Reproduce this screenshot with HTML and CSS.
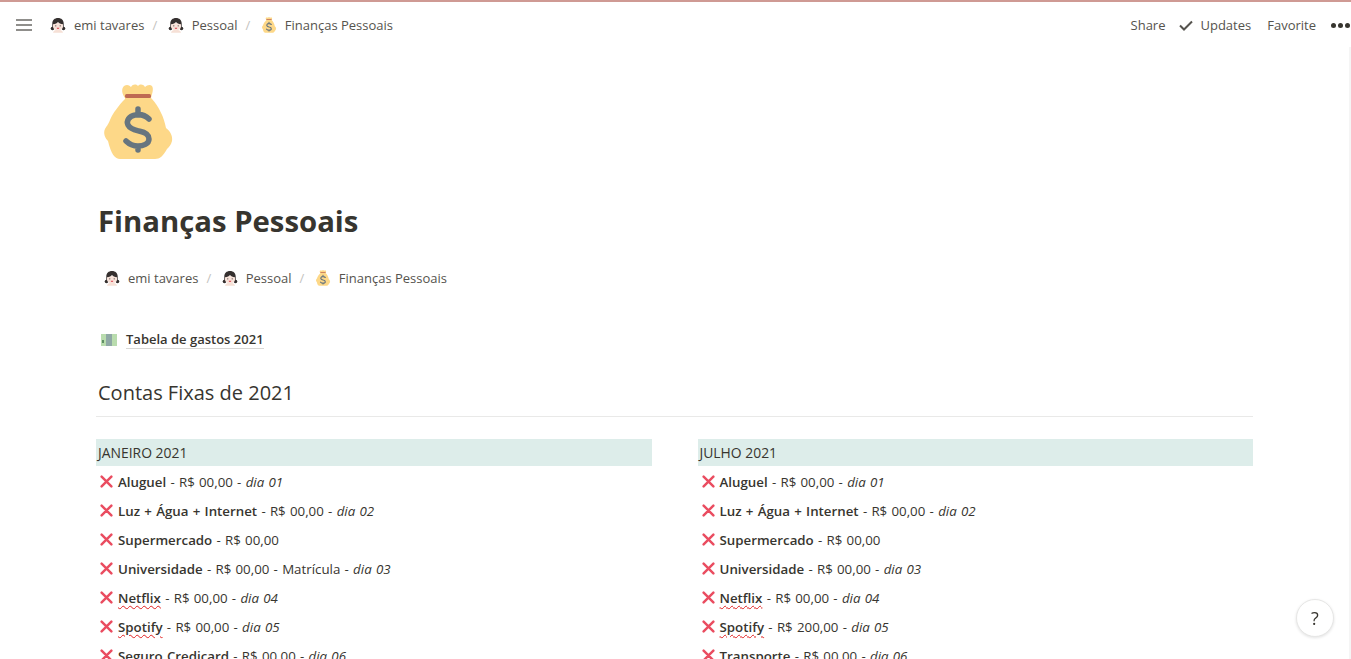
FILE: index.html
```html
<!DOCTYPE html>
<html>
<head>
<meta name="viewport" content="width=device-width, initial-scale=1">
<link rel="stylesheet" href="styles.css">
</head>
<body>

<svg class="defs" width="0" height="0">
  <symbol id="girl" viewBox="0 0 16 16">
    <circle cx="2.500" cy="11.500" r="1.800" fill="#35302f"/>
    <circle cx="13.500" cy="11.500" r="1.800" fill="#35302f"/>
    <path fill="#f6e0d6" d="M3 15.800c.3-2 2.200-3 5-3s4.700 1 5 3z"/>
    <path fill="#f8e3da" d="M3 6h10v3.500c0 2.200-2.300 3.900-5 3.900s-5-1.700-5-3.900z"/>
    <path fill="#35302f" d="M8 1C4.600 1 2.300 3.200 2.300 6.400V10H3V7.300C5.300 7 7.200 6 8 4.900c.8 1.100 2.700 2.100 5 2.400V10h.7V6.400C13.700 3.200 11.400 1 8 1z"/>
    <circle cx="5.800" cy="8.800" r=".6" fill="#4a3f3c"/>
    <circle cx="10.200" cy="8.800" r=".6" fill="#4a3f3c"/>
    <path fill="#dc4a55" d="M6.600 10.800h2.800c-.2.800-.7 1.200-1.400 1.200s-1.200-.4-1.400-1.200z"/>
  </symbol>
  <symbol id="bag" viewBox="0 0 72 77">
    <path fill="#fdd888" d="M23 15C20 11 19 6 22 3c3-2 5-1 7 1 2-3 5-3 7-1 2-2 5-2 7 1 2-2 5-3 7-1 2 3 0 8-1 12l1 1c7 8 12 18 14 29 4 3 7 8 6 13-1 4-3 6-5 8-4 7-7 10-12 10H18c-5 0-9-5-12-18-3-3-5-8-3-12 1-2 3-4 5-9 3-7 9-15 15-21z"/>
    <rect x="23" y="11" width="26" height="4" rx="1.500" fill="#bf6952"/>
    <path fill="none" stroke="#67757f" stroke-width="5.500" stroke-linecap="round" d="M47 36c-4-4-9-5-14-4-6 1-9 6-7 10s7 5 11 6c5 1 10 3 10 8s-6 7-11 7-9-2-12-5M36 26v6M36 63v4"/>
  </symbol>
  <symbol id="money" viewBox="0 0 16 12">
    <rect width="16" height="12" fill="#b9dcae"/>
    <rect x="5" width="6" height="12" fill="#8fa8a5"/>
    <rect x="1" y="6" width="2" height="3" fill="#5f8f64"/>
  </symbol>
  <symbol id="cross" viewBox="0 0 16 16">
    <path stroke="#e8394f" stroke-width="3" stroke-linecap="round" opacity=".9" d="M2 2l12 12M14 2L2 14"/>
  </symbol>
</svg>

<div class="topline"></div>

<div class="topbar">
  <div class="crumbs">
    <svg class="menuicon" viewBox="0 0 16 12"><path d="M0 1h16M0 6h16M0 11h16"/></svg>
    <div class="trail trailTop">
      <span class="crumb"><svg class="emoji"><use href="#girl"/></svg>emi tavares</span>
      <span class="sep">/</span>
      <span class="crumb"><svg class="emoji"><use href="#girl"/></svg>Pessoal</span>
      <span class="sep">/</span>
      <span class="crumb"><svg class="emoji"><use href="#bag"/></svg>Finanças Pessoais</span>
    </div>
  </div>
  <div class="actions">
    <span>Share</span>
    <span class="updates"><svg class="check" viewBox="0 0 14 11"><path d="M1 5.500l4 4 8-8"/></svg>Updates</span>
    <span>Favorite</span>
    <span class="dots"><i></i><i></i><i></i></span>
  </div>
</div>

<div class="page">
  <svg class="pageicon"><use href="#bag"/></svg>
  <h1>Finanças Pessoais</h1>

  <div class="trail trailPage">
    <span class="crumb"><svg class="emoji"><use href="#girl"/></svg>emi tavares</span>
    <span class="sep">/</span>
    <span class="crumb"><svg class="emoji"><use href="#girl"/></svg>Pessoal</span>
    <span class="sep">/</span>
    <span class="crumb"><svg class="emoji"><use href="#bag"/></svg>Finanças Pessoais</span>
  </div>

  <div class="pagelink"><svg class="moneyicon"><use href="#money"/></svg><span>Tabela de gastos 2021</span></div>

  <h2>Contas Fixas de 2021</h2>

  <div class="columns">
    <div class="col">
      <div class="month">JANEIRO 2021</div>
      <div class="item"><svg class="x"><use href="#cross"/></svg><p><b>Aluguel</b> - R$ 00,00 - <em>dia 01</em></p></div>
      <div class="item"><svg class="x"><use href="#cross"/></svg><p><b>Luz + Água + Internet</b> - R$ 00,00 - <em>dia 02</em></p></div>
      <div class="item"><svg class="x"><use href="#cross"/></svg><p><b>Supermercado</b> - R$ 00,00</p></div>
      <div class="item"><svg class="x"><use href="#cross"/></svg><p><b>Universidade</b> - R$ 00,00 - Matrícula - <em>dia 03</em></p></div>
      <div class="item"><svg class="x"><use href="#cross"/></svg><p><b class="typo">Netflix</b> - R$ 00,00 - <em>dia 04</em></p></div>
      <div class="item"><svg class="x"><use href="#cross"/></svg><p><b class="typo">Spotify</b> - R$ 00,00 - <em>dia 05</em></p></div>
      <div class="item"><svg class="x"><use href="#cross"/></svg><p><b>Seguro Credicard</b> - R$ 00,00 - <em>dia 06</em></p></div>
    </div>
    <div class="col">
      <div class="month">JULHO 2021</div>
      <div class="item"><svg class="x"><use href="#cross"/></svg><p><b>Aluguel</b> - R$ 00,00 - <em>dia 01</em></p></div>
      <div class="item"><svg class="x"><use href="#cross"/></svg><p><b>Luz + Água + Internet</b> - R$ 00,00 - <em>dia 02</em></p></div>
      <div class="item"><svg class="x"><use href="#cross"/></svg><p><b>Supermercado</b> - R$ 00,00</p></div>
      <div class="item"><svg class="x"><use href="#cross"/></svg><p><b>Universidade</b> - R$ 00,00 - <em>dia 03</em></p></div>
      <div class="item"><svg class="x"><use href="#cross"/></svg><p><b class="typo">Netflix</b> - R$ 00,00 - <em>dia 04</em></p></div>
      <div class="item"><svg class="x"><use href="#cross"/></svg><p><b class="typo">Spotify</b> - R$ 200,00 - <em>dia 05</em></p></div>
      <div class="item"><svg class="x"><use href="#cross"/></svg><p><b>Transporte</b> - R$ 00,00 - <em>dia 06</em></p></div>
    </div>
  </div>
</div>

<div class="help">?</div>
<div class="scrolltrack"></div>

</body>
</html>
```

FILE: styles.css
```css
html, body {
  height: 100%;
}

body {
  margin: 0;
  overflow: hidden;
  background-color: #fff;
  color: #37352f;
  font-family: "Open Sans", "Noto Sans", sans-serif;
  font-size: 14px;
}

.defs {
  display: block;
  height: 0;
}

.topline {
  height: 2px;
  background-color: #cf9a94;
}

.topbar {
  display: flex;
  justify-content: space-between;
  align-items: center;
  height: 46px;
  padding: 0 1px 0 16px;
  font-size: 13px;
  color: #55534e;
}

.crumbs {
  display: flex;
  align-items: center;
}

.menuicon {
  width: 16px;
  height: 12px;
  margin-right: 18px;
  fill: none;
  stroke: #6b6a65;
  stroke-width: 1.500;
}

.trail {
  display: flex;
  align-items: center;
  color: #55534e;
}

.crumb {
  display: flex;
  align-items: center;
}

.emoji {
  width: 16px;
  height: 16px;
  margin-right: 8px;
}

.sep {
  margin: 0 10.5px 0 8px;
  color: #c4c3c0;
}

.actions {
  display: flex;
  align-items: center;
  gap: 16px;
}

.updates {
  display: flex;
  align-items: center;
  margin-left: -2px;
}

.check {
  width: 14px;
  height: 11px;
  margin-right: 7px;
  fill: none;
  stroke: #55534e;
  stroke-width: 2;
}

.dots {
  display: flex;
  gap: 2px;
  margin-left: -1px;
}

.dots i {
  width: 5px;
  height: 5px;
  border-radius: 50%;
  background-color: #37352f;
}

.page {
  width: 1157px;
  margin-left: 96px;
}

.pageicon {
  display: block;
  width: 72px;
  height: 77px;
  margin: 35px 0 0 6px;
}

h1 {
  margin: 41px 0 0 2px;
  font-size: 29.3px;
  font-weight: 700;
  line-height: 40px;
}

.trailPage {
  margin: 27px 0 0 8px;
  font-size: 13px;
  line-height: 20px;
}

.pagelink {
  display: flex;
  align-items: center;
  margin: 42px 0 0 5px;
  font-size: 13px;
  font-weight: 600;
  line-height: 20px;
}

.pagelink span {
  border-bottom: 1px solid #d8d7d5;
  line-height: 18px;
}

.moneyicon {
  width: 16px;
  height: 12px;
  margin-right: 9px;
}

h2 {
  margin: 30px 0 0;
  padding: 0 0 9px 2px;
  border-bottom: 1px solid #e9e9e8;
  font-size: 20px;
  font-weight: 500;
  line-height: 28px;
}

.columns {
  display: flex;
  gap: 46px;
  margin-top: 22px;
}

.col {
  flex: 1;
}

.month {
  margin-bottom: 1px;
  padding: 1px 0 0 2px;
  background-color: #ddedea;
  font-size: 13.9px;
  line-height: 26px;
}

.item {
  display: flex;
  align-items: center;
  height: 29px;
  padding-left: 4px;
  font-size: 13.3px;
  word-spacing: 0.8px;
  white-space: nowrap;
}

.x {
  width: 13px;
  height: 13px;
  margin: -1px 5px 0 0;
}

.item p {
  margin: 0;
}

.item b {
  font-weight: 600;
}

.typo {
  text-decoration: underline wavy #e02020 1px;
  text-underline-offset: 2px;
}

.help {
  position: fixed;
  right: 17px;
  bottom: 22px;
  width: 36px;
  height: 36px;
  border: 1px solid #e6e6e5;
  border-radius: 50%;
  background-color: #fff;
  box-shadow: 0 1px 3px rgba(15, 15, 15, 0.12);
  font-size: 18px;
  line-height: 36px;
  text-align: center;
}

.scrolltrack {
  position: fixed;
  top: 47px;
  right: 0;
  bottom: 0;
  width: 2px;
  background-color: #f5f5f5;
}
```
